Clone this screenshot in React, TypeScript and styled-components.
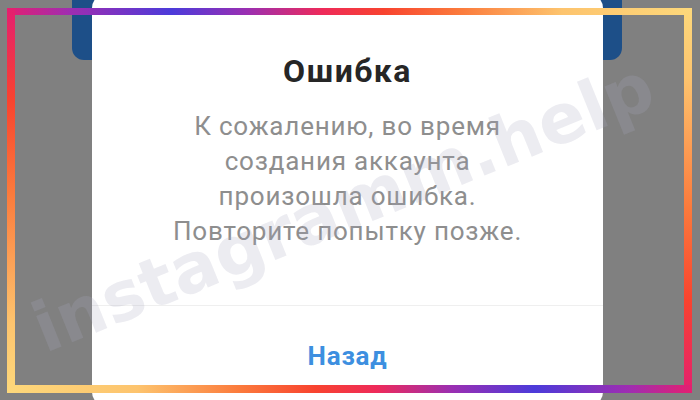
import { createGlobalStyle, styled } from "styled-components"

const GlobalStyle = createGlobalStyle`
  html, body {
    margin:0;
    padding:0;
  }
  body {
    background:#7f7f7f;
    font-family:Roboto, "Noto Sans", sans-serif;
  }
`
const Stage = styled.div`
  position:relative;
  width:700px;
  height:400px;
  overflow:hidden;
  background:#808080;
`
const BackScreen = styled.div`
  margin:0 78px 0 72px;
  height:60px;
  background:#1d4f88;
  border-radius:0 0 12px 12px;
`
const Overlay = styled.div`
  position:absolute;
  inset:0;
  display:flex;
  align-items:center;
  padding-left:92px;
`
const Dialog = styled.div`
  flex-shrink:0;
  width:511px;
  height:412px;
  display:flex;
  flex-direction:column;
  background:#fff;
  border-radius:14px;
`
const Body = styled.div`
  flex:1;
  padding-top:58px;
  text-align:center;
`
const Title = styled.h2`
  margin:0 0 19px;
  font-size:32px;
  line-height:38px;
  letter-spacing:1.5px;
  font-weight:700;
  color:#262626;
`
const Message = styled.p`
  margin:0;
  font-size:26px;
  line-height:35px;
  letter-spacing:0.8px;
  color:#8e8e8e;
`
const ButtonRow = styled.div`
  height:100px;
  display:flex;
  align-items:center;
  justify-content:center;
  border-top:1px solid #efefef;
`
const BackButton = styled.button`
  border:0;
  background:none;
  padding:0;
  font-family:Roboto, "Noto Sans", sans-serif;
  font-size:26px;
  letter-spacing:0.8px;
  font-weight:700;
  color:#3d8fe0;
`
const Watermark = styled.div`
  position:absolute;
  left:343px;
  top:207px;
  transform:translate(-50%, -50%) rotate(-22deg);
  font-family:"DejaVu Sans", sans-serif;
  font-weight:700;
  font-size:69px;
  white-space:nowrap;
  color:rgba(170, 170, 192, 0.22);
  pointer-events:none;
`
const Frame = styled.div`
  position:absolute;
  left:7px;
  top:8px;
  width:685px;
  height:385px;
  pointer-events:none;
`
const edges = {
  top: `top:0; left:0; right:0; height:7px;
    background:linear-gradient(90deg, #e41f70 0%, #a02db0 9%, #4c3bda 24%, #9a2fb2 35%, #ee2a5a 46%, #f8432f 55%, #fb7a3c 66%, #fdc46e 81%, #fdd87b 100%);`,
  right: `top:0; right:0; bottom:0; width:8px;
    background:linear-gradient(180deg, #fdd87b 0%, #fdc46e 18%, #fb7a3c 52%, #f8432f 76%, #e41f70 100%);`,
  bottom: `bottom:0; left:0; right:0; height:8px;
    background:linear-gradient(90deg, #fdd87b 0%, #fdc46e 19%, #fb7a3c 34%, #f8432f 45%, #ee2a5a 54%, #9a2fb2 65%, #4c3bda 77%, #a02db0 91%, #e41f70 100%);`,
  left: `top:0; left:0; bottom:0; width:8px;
    background:linear-gradient(180deg, #e41f70 0%, #f8432f 24%, #fb7a3c 48%, #fdc46e 82%, #fdd87b 100%);`,
}
const Edge = styled.div<{ $side: keyof typeof edges }>`
  position:absolute;
  ${(p) => edges[p.$side]}
`

const App: React.FC = () => {
  return (
    <Stage>
      <GlobalStyle />
      <BackScreen />
      <Overlay>
        <Dialog>
          <Body>
            <Title>Ошибка</Title>
            <Message>
              К сожалению, во время<br />
              создания аккаунта<br />
              произошла ошибка.<br />
              Повторите попытку позже.
            </Message>
          </Body>
          <ButtonRow>
            <BackButton>Назад</BackButton>
          </ButtonRow>
        </Dialog>
      </Overlay>
      <Watermark>instagramm.help</Watermark>
      <Frame>
        <Edge $side="top" />
        <Edge $side="right" />
        <Edge $side="bottom" />
        <Edge $side="left" />
      </Frame>
    </Stage>
  )
}
export default App
